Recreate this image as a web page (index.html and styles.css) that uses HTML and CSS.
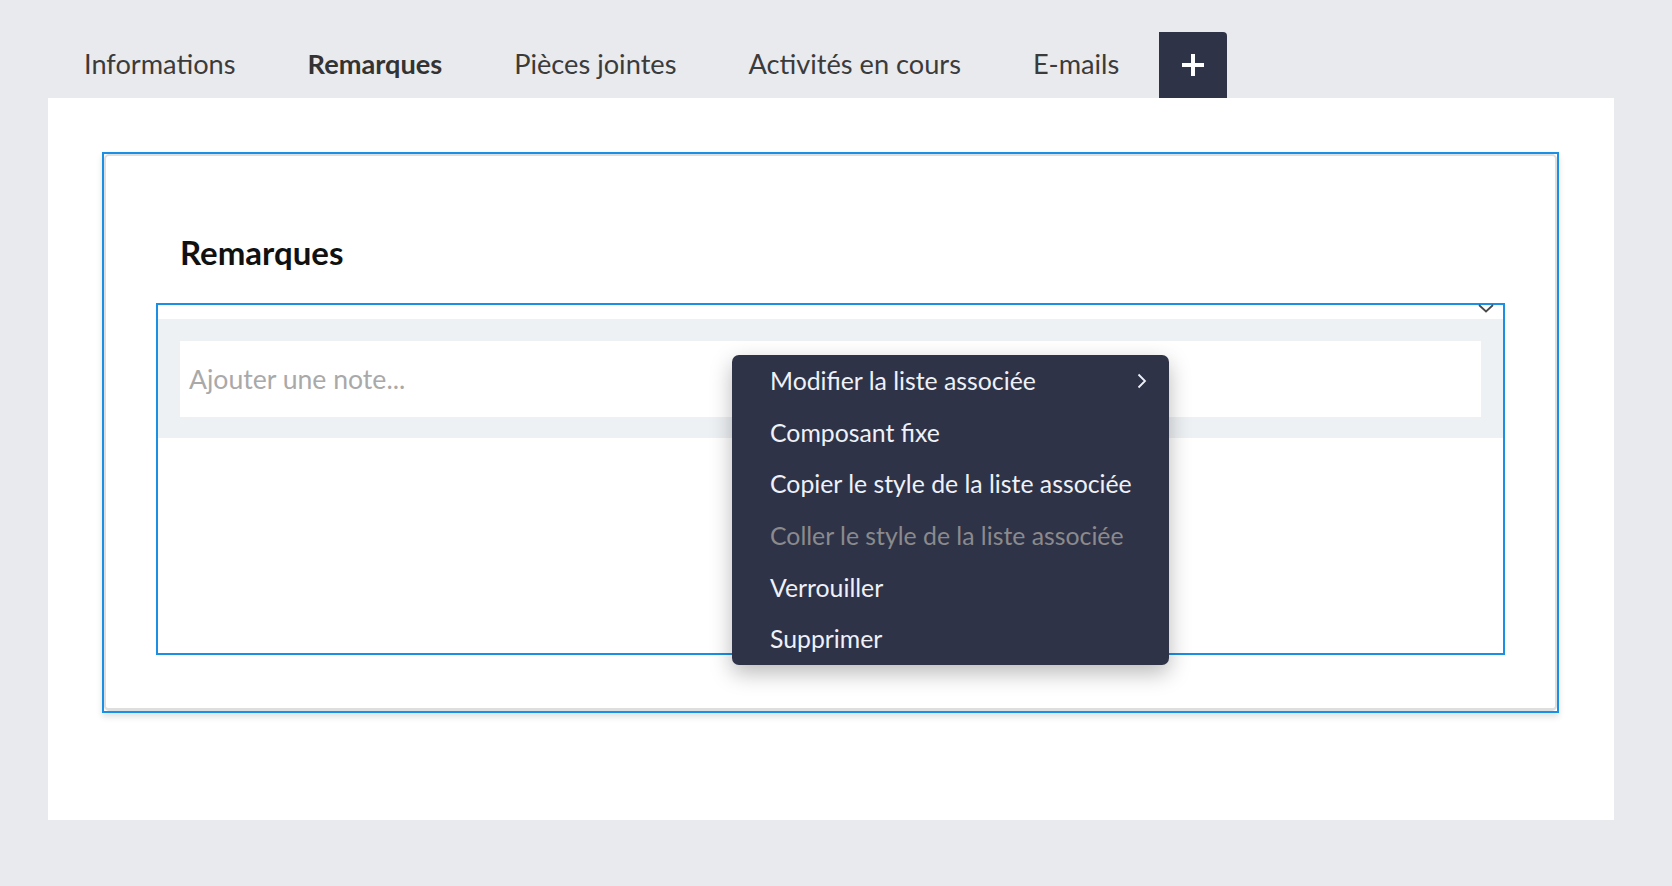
FILE: index.html
```html
<!DOCTYPE html>
<html lang="fr">
<head>
<meta charset="utf-8">
<title>Remarques</title>
<link rel="stylesheet" href="styles.css">
</head>
<body>
<div class="page">
  <nav class="tabs">
    <div class="tab">Informations</div>
    <div class="tab active">Remarques</div>
    <div class="tab">Pièces jointes</div>
    <div class="tab">Activités en cours</div>
    <div class="tab last">E-mails</div>
    <div class="tab-add">
      <svg width="24" height="24" viewBox="0 0 24 24"><path d="M12 1v22M1 12h22" stroke="#fff" stroke-width="4" fill="none"/></svg>
    </div>
  </nav>
  <main class="panel">
    <section class="card">
      <div class="card-inner">
        <h2 class="card-title">Remarques</h2>
        <div class="list">
          <svg class="list-chevron" width="16" height="9" viewBox="0 0 16 9"><path d="M1 1l7 6.5L15 1" stroke="#4a4a4a" stroke-width="1.8" fill="none"/></svg>
          <div class="list-band">
            <div class="note-input">Ajouter une note...</div>
          </div>
        </div>
      </div>
      <div class="menu">
        <div class="menu-item">Modifier la liste associée
          <svg class="menu-arrow" width="10" height="16" viewBox="0 0 10 16"><path d="M1.5 1.5l6.5 6.5-6.5 6.5" stroke="#eef1f8" stroke-width="1.8" fill="none"/></svg>
        </div>
        <div class="menu-item">Composant fixe</div>
        <div class="menu-item">Copier le style de la liste associée</div>
        <div class="menu-item disabled">Coller le style de la liste associée</div>
        <div class="menu-item">Verrouiller</div>
        <div class="menu-item">Supprimer</div>
      </div>
    </section>
  </main>
</div>
</body>
</html>
```

FILE: styles.css
```css
* { box-sizing: border-box; }
html, body {
  margin: 0;
  padding: 0;
  background: #e9eaee;
  font-family: Lato, "Open Sans", sans-serif;
}
.page {
  padding: 0 58px 0 48px;
  height: 886px;
}
.tabs {
  display: flex;
  align-items: flex-end;
  height: 98px;
}
.tab {
  padding: 0 36px;
  height: 66px;
  line-height: 64px;
  font-size: 27.2px;
  color: #3b3b3b;
  white-space: nowrap;
}
.tab.active {
  font-weight: 700;
  color: #333;
}
.tab.last {
  padding-right: 40px;
}
.tab-add {
  width: 68px;
  height: 66px;
  background: #2f3347;
  border-radius: 0 4px 0 0;
  display: flex;
  align-items: center;
  justify-content: center;
}
.panel {
  background: #fff;
  height: 722px;
  padding: 54px 55px 0 54px;
}
.card {
  position: relative;
  height: 561px;
  border: 2px solid #1a8fe3;
  box-shadow: 0 4px 6px rgba(0,0,0,0.12);
}
.card-inner {
  height: 100%;
  border: 2px solid #dedede;
  border-bottom-width: 3px;
  border-radius: 5px;
  padding: 76px 50px 0 50px;
}
.card-title {
  margin: 0 0 31px 24px;
  font-size: 33px;
  font-weight: 700;
  color: #111;
  line-height: 40px;
}
.list {
  position: relative;
  height: 352px;
  border: 2px solid #1a8fe3;
  padding-top: 14px;
}
.list-chevron {
  position: absolute;
  top: -1px;
  right: 9px;
}
.list-band {
  background: #eef1f4;
  padding: 22px 22px 21px 22px;
}
.note-input {
  background: #fff;
  height: 76px;
  line-height: 76px;
  padding-left: 9px;
  font-size: 26.6px;
  color: #a9a9a9;
}
.menu {
  position: absolute;
  left: 628px;
  top: 201px;
  width: 437px;
  height: 310px;
  background: #2f3348;
  border-radius: 7px;
  box-shadow: 0 8px 22px rgba(0,0,0,0.28);
  padding: 0 22px 0 38px;
}
.menu-item {
  display: flex;
  align-items: center;
  justify-content: space-between;
  height: 51.6px;
  font-size: 24.8px;
  color: #eef1f8;
  white-space: nowrap;
}
.menu-item.disabled {
  color: #8b8a8c;
}
```
